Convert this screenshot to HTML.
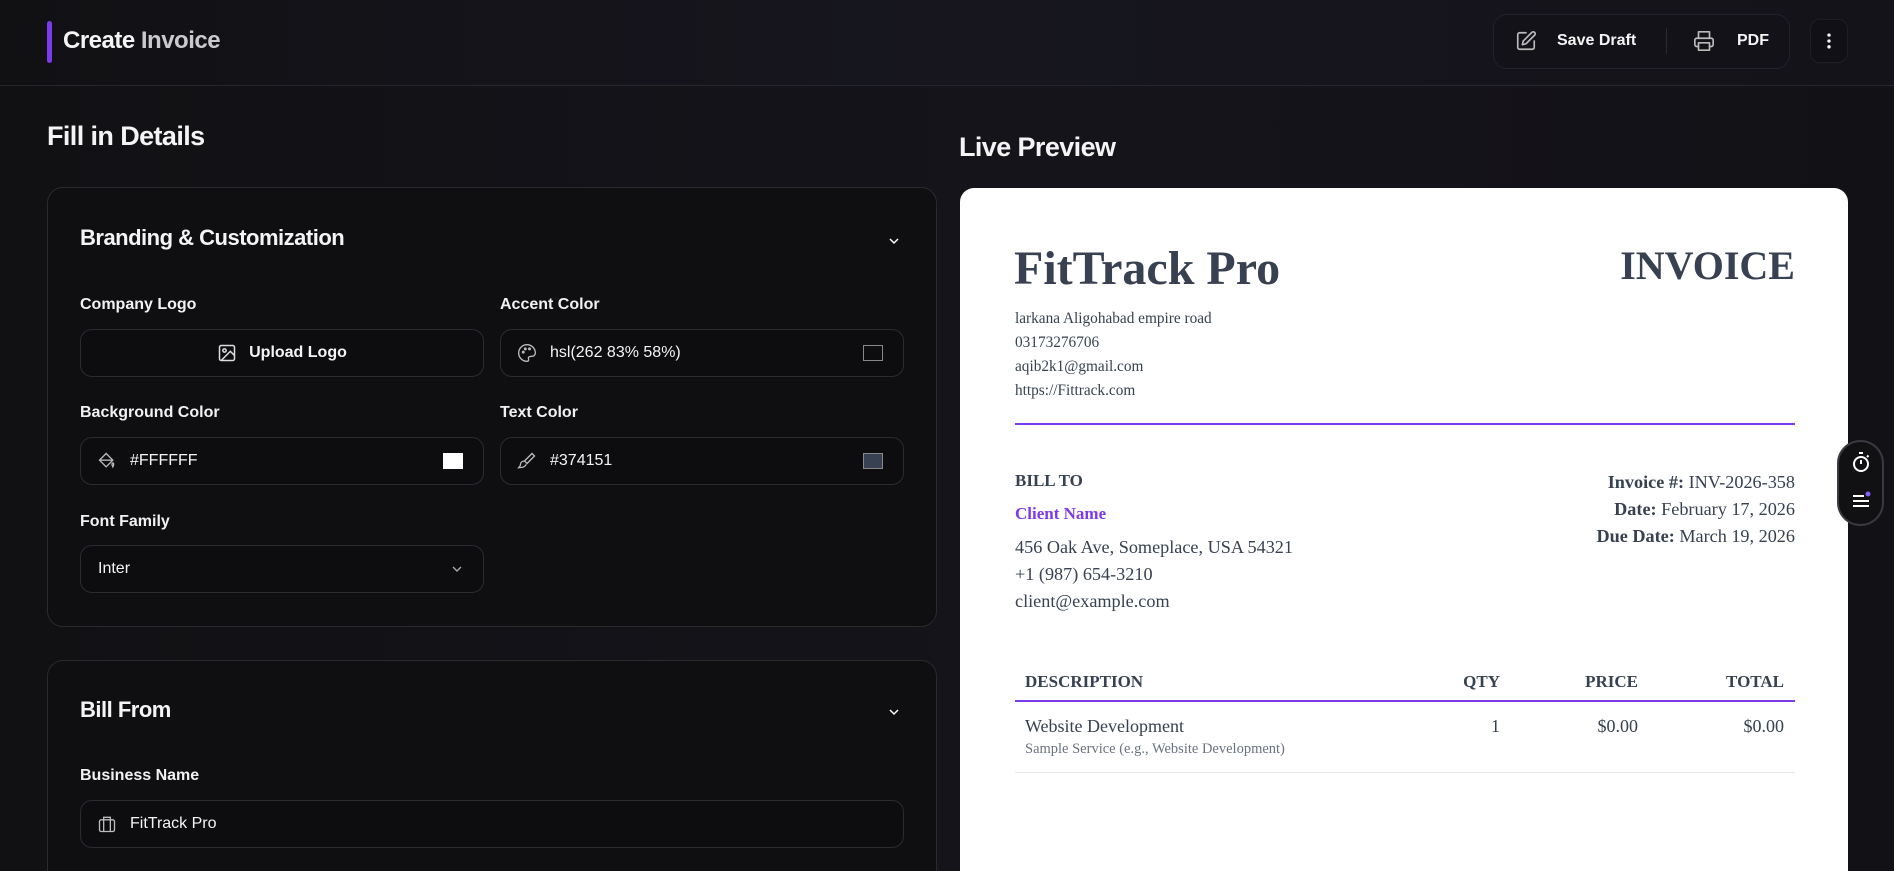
<!DOCTYPE html>
<html style="overflow:hidden;width:1894px;height:871px"><head><meta charset="utf-8"><style>
*{box-sizing:border-box;margin:0;padding:0}
body{width:1894px;height:871px;overflow:hidden;background:linear-gradient(90deg,#111114 0%,#141319 40%,#15141b 60%,#121116 100%);font-family:"Liberation Sans",sans-serif;color:#f4f4f5;position:relative}
.abs{position:absolute}
.hdr{left:0;top:0;width:1894px;height:86px;border-bottom:1px solid #26252c;background:linear-gradient(90deg,#111114,#17161f 50%,#141319)}
.bar{left:47px;top:21px;width:5px;height:42px;background:#7c3aed;border-radius:3px}
.title{left:63px;top:27px;font-size:24px;font-weight:bold;letter-spacing:-0.5px}
.title span{color:#c9c9ce}
.grp{left:1493px;top:14px;width:297px;height:55px;border:1px solid #22212a;border-radius:14px;background:#131219}
.btxt{font-size:16px;font-weight:bold;top:32px}
.kebab{left:1810px;top:19px;width:38px;height:44px;border:1px solid #1f1e25;border-radius:10px;background:#111016}
h2{position:absolute;font-size:27px;font-weight:bold;letter-spacing:-0.6px}
.card{left:47px;width:890px;border:1px solid #2a2930;border-radius:16px;background:#0f0f12}
.ct{font-size:22px;font-weight:bold;letter-spacing:-0.5px}
.lbl{font-size:16px;font-weight:bold;color:#f1f1f3}
.inp{height:48px;border:1px solid #2c2b32;border-radius:12px;background:#0d0d10;font-size:16px;display:flex;align-items:center}
.paper{left:960px;top:188px;width:888px;height:683px;background:#fff;border-radius:14px 14px 0 0}
.s{font-family:"Liberation Serif",serif;color:#374151}
.sw{position:absolute;width:20px;height:16px;border:1px solid #888;top:15px;right:20px}
</style></head><body>
<div class="abs hdr"></div>
<div class="abs bar"></div>
<div class="abs title">Create <span>Invoice</span></div>
<div class="abs grp"></div>
<svg class="abs" style="left:1515px;top:30px" width="22" height="22" viewBox="0 0 24 24" fill="none" stroke="#bbb" stroke-width="1.8" stroke-linecap="round" stroke-linejoin="round"><path d="M12 3H5a2 2 0 0 0-2 2v14a2 2 0 0 0 2 2h14a2 2 0 0 0 2-2v-7"/><path d="M18.4 2.6a2.1 2.1 0 0 1 3 3L12 15l-4 1 1-4z"/></svg>
<div class="abs btxt" style="left:1557px;top:32px">Save Draft</div>
<div class="abs" style="left:1666px;top:28px;width:1px;height:26px;background:#2a2930"></div>
<svg class="abs" style="left:1693px;top:30px" width="22" height="22" viewBox="0 0 24 24" fill="none" stroke="#bbb" stroke-width="1.8" stroke-linecap="round" stroke-linejoin="round"><path d="M6 9V2h12v7"/><path d="M6 18H4a2 2 0 0 1-2-2v-5a2 2 0 0 1 2-2h16a2 2 0 0 1 2 2v5a2 2 0 0 1-2 2h-2"/><rect x="6" y="14" width="12" height="8"/></svg>
<div class="abs btxt" style="left:1737px;top:32px">PDF</div>
<div class="abs kebab"></div>
<svg class="abs" style="left:1819px;top:31px" width="20" height="20" viewBox="0 0 24 24" fill="#fff"><circle cx="12" cy="5" r="2"/><circle cx="12" cy="12" r="2"/><circle cx="12" cy="19" r="2"/></svg>

<h2 style="left:47px;top:121px">Fill in Details</h2>
<h2 style="left:959px;top:132px">Live Preview</h2>

<div class="abs card" style="top:187px;height:440px"></div>
<div class="abs ct" style="left:80px;top:225px">Branding &amp; Customization</div>
<svg class="abs" style="left:885px;top:233px" width="18" height="16" viewBox="0 0 24 24" fill="none" stroke="#fff" stroke-width="2.2"><path d="M6 9l6 6 6-6"/></svg>
<div class="abs lbl" style="left:80px;top:296px">Company Logo</div>
<div class="abs lbl" style="left:500px;top:296px">Accent Color</div>
<div class="abs inp" style="left:80px;top:329px;width:404px;justify-content:center;font-weight:bold"><svg width="20" height="20" viewBox="0 0 24 24" fill="none" stroke="#ddd" stroke-width="1.8" style="margin-right:12px"><rect x="3" y="3" width="18" height="18" rx="2"/><circle cx="9" cy="9" r="2"/><path d="M21 15l-5-5L5 21"/></svg>Upload Logo</div>
<div class="abs inp" style="left:500px;top:329px;width:404px;padding-left:16px"><svg width="20" height="20" viewBox="0 0 24 24" fill="none" stroke="#bbb" stroke-width="1.6" style="margin-right:13px"><path d="M12 2a10 10 0 0 0 0 20c1.5 0 2-1 2-2 0-1.5-1-2 0-3s2-1 4-1a4 4 0 0 0 4-4c0-5.5-4.5-10-10-10z"/><circle cx="7.5" cy="11" r="1"/><circle cx="10" cy="7" r="1"/><circle cx="15" cy="7" r="1"/></svg>hsl(262 83% 58%)<div class="sw" style="background:#0d0d10"></div></div>
<div class="abs lbl" style="left:80px;top:404px">Background Color</div>
<div class="abs lbl" style="left:500px;top:404px">Text Color</div>
<div class="abs inp" style="left:80px;top:437px;width:404px;padding-left:16px"><svg width="20" height="20" viewBox="0 0 24 24" fill="none" stroke="#bbb" stroke-width="1.6" style="margin-right:13px"><path d="M19 11L11 3 3 11l8 8z"/><path d="M3 11h16"/><path d="M20 16c0 1-1 3-1 3s-1-2-1-3 .5-1.5 1-1.5 1 .5 1 1.5z"/></svg>#FFFFFF<div class="sw" style="background:#fff;border-color:#fff"></div></div>
<div class="abs inp" style="left:500px;top:437px;width:404px;padding-left:16px"><svg width="20" height="20" viewBox="0 0 24 24" fill="none" stroke="#bbb" stroke-width="1.6" style="margin-right:13px"><path d="M18 3l3 3-9 9-3-3z"/><path d="M9 12c-3 0-5 2-5 5 0 1-1 2-2 3 4 0 8-1 9-4"/></svg>#374151<div class="sw" style="background:#374151"></div></div>
<div class="abs lbl" style="left:80px;top:513px">Font Family</div>
<div class="abs inp" style="left:80px;top:545px;width:404px;padding-left:17px">Inter<svg class="abs" style="right:18px;top:15px" width="16" height="16" viewBox="0 0 24 24" fill="none" stroke="#aaa" stroke-width="2"><path d="M6 9l6 6 6-6"/></svg></div>

<div class="abs card" style="top:660px;height:211px;border-bottom:none;border-radius:16px 16px 0 0"></div>
<div class="abs ct" style="left:80px;top:697px">Bill From</div>
<svg class="abs" style="left:885px;top:704px" width="18" height="16" viewBox="0 0 24 24" fill="none" stroke="#fff" stroke-width="2.2"><path d="M6 9l6 6 6-6"/></svg>
<div class="abs lbl" style="left:80px;top:767px">Business Name</div>
<div class="abs inp" style="left:80px;top:800px;width:824px;padding-left:16px"><svg width="20" height="20" viewBox="0 0 24 24" fill="none" stroke="#bbb" stroke-width="1.6" style="margin-right:13px"><rect x="3" y="7" width="18" height="14" rx="2"/><path d="M8 7V4h8v3M8 7v14M16 7v14"/></svg>FitTrack Pro</div>

<div class="abs paper"></div>
<div class="abs s" style="left:1014px;top:241px;font-size:48px;font-weight:bold;line-height:56px">FitTrack Pro</div>
<div class="abs s" style="right:99px;top:242px;font-size:40px;font-weight:bold;line-height:48px">INVOICE</div>
<div class="abs s" style="left:1015px;top:307px;font-size:15.3px;line-height:24px">larkana Aligohabad empire road<br>03173276706<br>aqib2k1@gmail.com<br>https://Fittrack.com</div>
<div class="abs" style="left:1015px;top:423px;width:780px;height:2px;background:#7c3aed"></div>
<div class="abs s" style="left:1015px;top:471px;font-size:17px;font-weight:bold">BILL TO</div>
<div class="abs s" style="left:1015px;top:504px;font-size:17px;font-weight:bold;color:#7c3aed">Client Name</div>
<div class="abs s" style="left:1015px;top:534px;font-size:18.2px;line-height:27px">456 Oak Ave, Someplace, USA 54321<br>+1 (987) 654-3210<br>client@example.com</div>
<div class="abs s" style="right:99px;top:469px;font-size:18.2px;line-height:27px;text-align:right"><b>Invoice #:</b> INV-2026-358<br><b>Date:</b> February 17, 2026<br><b>Due Date:</b> March 19, 2026</div>
<div class="abs s" style="left:1025px;top:672px;font-size:17px;font-weight:bold">DESCRIPTION</div>
<div class="abs s" style="right:394px;top:672px;font-size:17px;font-weight:bold">QTY</div>
<div class="abs s" style="right:256px;top:672px;font-size:17px;font-weight:bold">PRICE</div>
<div class="abs s" style="right:110px;top:672px;font-size:17px;font-weight:bold">TOTAL</div>
<div class="abs" style="left:1015px;top:700px;width:780px;height:2px;background:#7c3aed"></div>
<div class="abs s" style="left:1025px;top:716px;font-size:18px">Website Development</div>
<div class="abs s" style="left:1025px;top:741px;font-size:14.5px;color:#6b7280">Sample Service (e.g., Website Development)</div>
<div class="abs s" style="right:394px;top:716px;font-size:18px">1</div>
<div class="abs s" style="right:256px;top:716px;font-size:18px">$0.00</div>
<div class="abs s" style="right:110px;top:716px;font-size:18px">$0.00</div>
<div class="abs" style="left:1015px;top:772px;width:780px;height:1px;background:#e5e7eb"></div>

<div class="abs" style="left:1837px;top:440px;width:47px;height:86px;background:#111114;border:2px solid #3a3940;border-radius:24px"></div>
<svg class="abs" style="left:1849px;top:450px" width="24" height="24" viewBox="0 0 24 24" fill="none" stroke="#fff" stroke-width="2"><circle cx="12" cy="14" r="7"/><path d="M10 3h4M12 14V10M18 7l1.5-1.5"/></svg>
<svg class="abs" style="left:1849px;top:489px" width="24" height="24" viewBox="0 0 24 24" fill="none" stroke="#fff" stroke-width="2"><path d="M4 7h11M4 12h16M4 17h16"/><circle cx="19" cy="5" r="2.5" fill="#8b5cf6" stroke="none"/></svg>
</body></html>
